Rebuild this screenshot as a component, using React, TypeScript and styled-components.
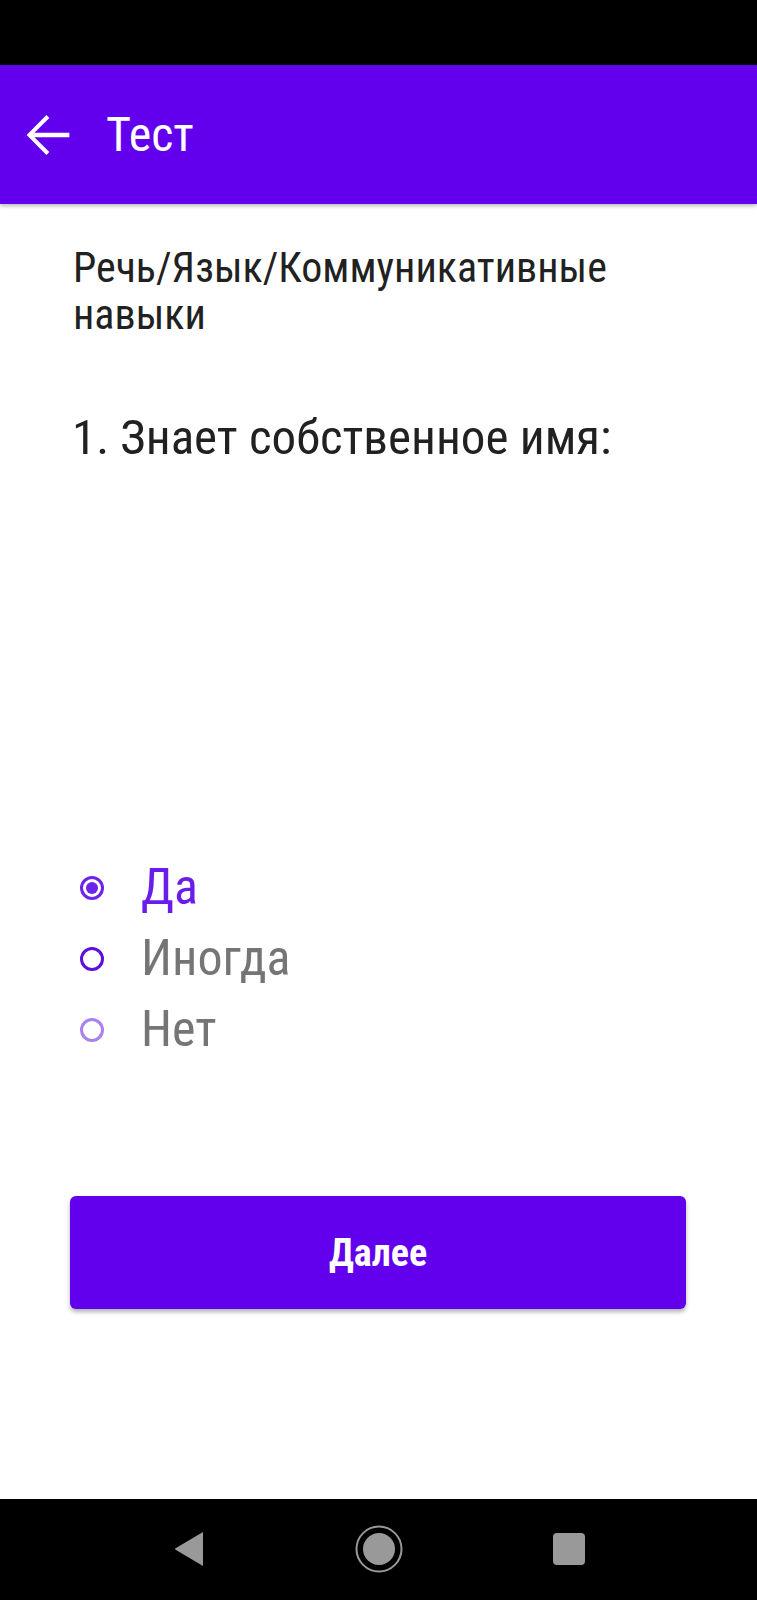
import React, { useState } from "react";
import styled, { createGlobalStyle } from "styled-components";

const GlobalStyle = createGlobalStyle`
  html, body { margin: 0; padding: 0; background: #ffffff; }
  body { font-family: "Roboto Condensed", Roboto, "Noto Sans", sans-serif; }
  * { box-sizing: border-box; }
`;

const Screen = styled.div`
  width: 757px;
  height: 1600px;
  display: flex;
  flex-direction: column;
  background: #ffffff;
  overflow: hidden;
`;

const StatusBar = styled.div`
  height: 65px;
  flex: none;
  background: #000000;
`;

const AppBar = styled.header`
  height: 139px;
  flex: none;
  background: #6200ee;
  display: flex;
  align-items: center;
  padding-left: 16px;
  position: relative;
  z-index: 1;
  box-shadow: 0 2px 4px rgba(0, 0, 0, 0.28);
`;

const BackButton = styled.button`
  width: 64px;
  height: 64px;
  padding: 0;
  border: none;
  background: transparent;
  display: flex;
  align-items: center;
  justify-content: center;
  color: #ffffff;
`;

const Title = styled.h1`
  margin: 0 0 0 26px;
  font-weight: 400;
  font-size: 48px;
  line-height: 60px;
  color: #ffffff;
`;

const Content = styled.main`
  flex: 1;
  display: flex;
  flex-direction: column;
  padding: 40px 71px 0 70px;
`;

const Section = styled.h2`
  margin: 0;
  font-weight: 400;
  font-size: 42px;
  line-height: 47px;
  color: #212121;
  padding-left: 3px;
`;

const Question = styled.p`
  margin: 70px 0 0 0;
  font-size: 49px;
  line-height: 60px;
  color: #212121;
  padding-left: 2px;
`;

const Options = styled.div`
  margin-top: 384px;
  display: flex;
  flex-direction: column;
`;

const OptionRow = styled.label`
  height: 71px;
  display: flex;
  align-items: center;
  padding-left: 10px;
  gap: 37px;
  cursor: pointer;
`;

const RadioCircle = styled.span<{ $ring: string; $checked: boolean }>`
  width: 24px;
  height: 24px;
  flex: none;
  border-radius: 50%;
  border: 3px solid ${(p) => p.$ring};
  display: flex;
  align-items: center;
  justify-content: center;
  margin-top: 1px;
  &::after {
    content: "";
    width: 12px;
    height: 12px;
    border-radius: 50%;
    background: ${(p) => (p.$checked ? p.$ring : "transparent")};
  }
`;

const OptionLabel = styled.span<{ $checked: boolean }>`
  font-size: 50px;
  line-height: 71px;
  color: ${(p) => (p.$checked ? "#6a1de8" : "#757575")};
`;

const NextButton = styled.button`
  margin-top: 131px;
  height: 113px;
  width: 616px;
  border: none;
  border-radius: 6px;
  background: #6200ee;
  color: #ffffff;
  font-family: inherit;
  font-weight: 700;
  font-size: 38px;
  box-shadow: 0 3px 4px rgba(0, 0, 0, 0.3);
  cursor: pointer;
`;

const NavBar = styled.nav`
  height: 101px;
  flex: none;
  background: #000000;
  display: flex;
  align-items: center;
  justify-content: center;
  padding-bottom: 2px;
`;

const NavSlot = styled.div`
  width: 190px;
  height: 60px;
  display: flex;
  align-items: center;
  justify-content: center;
`;

const options = [
  { id: "yes", label: "Да", ring: "#6c24ea" },
  { id: "sometimes", label: "Иногда", ring: "#5c10dc" },
  { id: "no", label: "Нет", ring: "#a883f0" },
];

export default function App() {
  const [value, setValue] = useState("yes");
  return (
    <Screen>
      <GlobalStyle />
      <StatusBar />
      <AppBar>
        <BackButton aria-label="Назад">
          <svg width="64" height="64" viewBox="0 0 24 24" fill="currentColor">
            <path d="M20 11.2H6.9l5.6-5.6L11.4 4.5 4 12l7.4 7.5 1.1-1.1-5.6-5.6H20z" />
          </svg>
        </BackButton>
        <Title>Тест</Title>
      </AppBar>
      <Content>
        <Section>
          Речь/Язык/Коммуникативные
          <br />
          навыки
        </Section>
        <Question>1. Знает собственное имя:</Question>
        <Options>
          {options.map((o) => {
            const checked = value === o.id;
            return (
              <OptionRow key={o.id} onClick={() => setValue(o.id)}>
                <RadioCircle $ring={o.ring} $checked={checked} />
                <OptionLabel $checked={checked}>{o.label}</OptionLabel>
              </OptionRow>
            );
          })}
        </Options>
        <NextButton>Далее</NextButton>
      </Content>
      <NavBar>
        <NavSlot>
          <svg width="34" height="40" viewBox="0 0 34 40">
            <path d="M31 3 L31 37 L4 21 Q2 20 4 19 Z" fill="#999999" />
          </svg>
        </NavSlot>
        <NavSlot>
          <svg width="50" height="50" viewBox="0 0 50 50">
            <circle cx="25" cy="25" r="22.5" fill="none" stroke="#999999" strokeWidth="2" />
            <circle cx="25" cy="25" r="16" fill="#999999" />
          </svg>
        </NavSlot>
        <NavSlot>
          <svg width="34" height="34" viewBox="0 0 34 34">
            <rect x="1" y="1" width="32" height="32" rx="4" fill="#999999" />
          </svg>
        </NavSlot>
      </NavBar>
    </Screen>
  );
}
